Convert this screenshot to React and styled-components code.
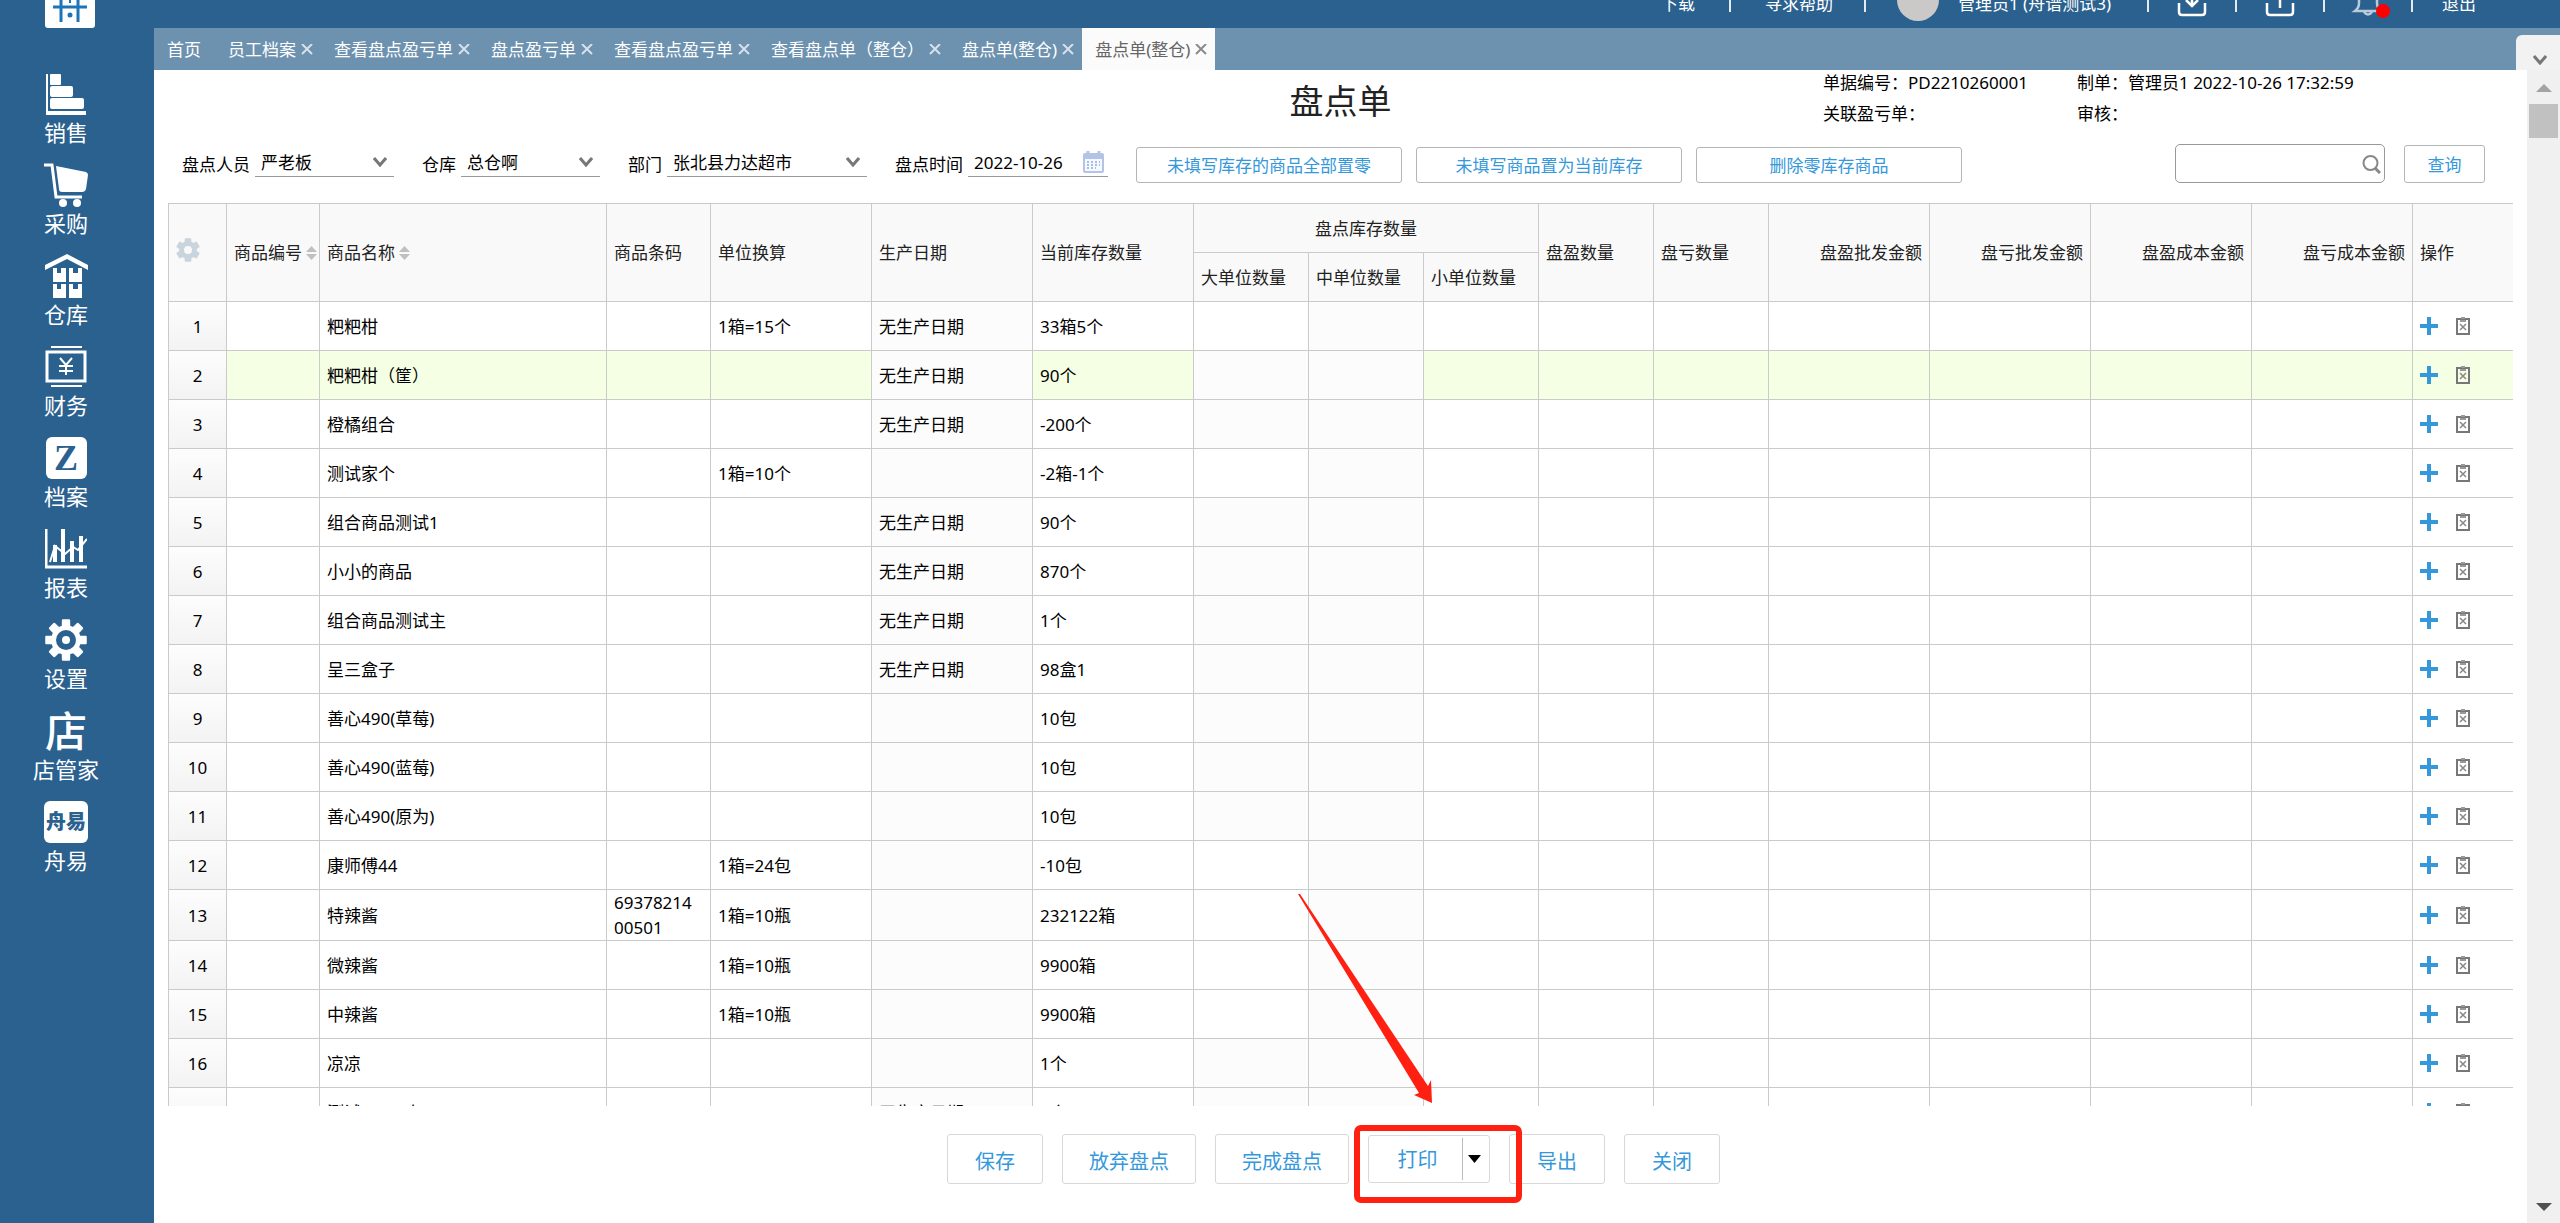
import React from "react";
import styled, { createGlobalStyle, css } from "styled-components";

const color = {
  navy: "#2a618f",
  tabs: "#6d92b0",
  link: "#3498db",
  line: "#cacaca",
  head: "#f9f9f9",
  locked: "#fcfcfc",
  hover: "#f5ffe3",
  mark: "#ff2011",
};

const GlobalStyle = createGlobalStyle`
  * {
    box-sizing: border-box;
  }

  body {
    margin: 0;
    color: #000;
    background: #fff;
    font-family: "Noto Sans", "Noto Sans CJK SC", sans-serif;
    font-size: 17px;
    line-height: 25px;
  }

  button, input, select {
    font: inherit;
    color: inherit;
  }

  button {
    padding: 0;
    border: 0;
    background: none;
    cursor: pointer;
  }
`;

//Page frame
const Page = styled.div`
  display: flex;
  height: 100vh;
  min-width: 1900px;
  overflow: hidden;
`;

const Sidebar = styled.nav`
  flex: none;
  display: flex;
  flex-direction: column;
  width: 154px;
  padding-right: 22px;
  background: ${color.navy};
`;

const Logo = styled.div`
  display: flex;
  justify-content: center;
  height: 70px;
  padding-left: 8px;
`;

const MenuItem = styled.a`
  display: flex;
  flex-direction: column;
  align-items: center;
  height: 91px;
  color: #fff;
  font-size: 22px;
  line-height: 32px;
  text-decoration: none;

  svg {
    display: block;
    margin-top: 2px;
  }
`;

const MenuGlyph = styled.span`
  height: 46px;
  font-size: 42px;
  line-height: 48px;
  font-weight: 500;
`;

const MenuBadge = styled.span`
  display: flex;
  align-items: center;
  justify-content: center;
  width: 44px;
  height: 42px;
  margin: 3px 0 1px;
  border-radius: 6px;
  background: #fff;
  color: ${color.navy};
  font-size: 20px;
  font-weight: 900;

  ${({ $serif }) =>
    $serif &&
    css`
      width: 41px;
      font-family: "Liberation Serif", serif;
      font-size: 36px;
    `}
`;

const Main = styled.div`
  flex: 1;
  min-width: 0;
  display: flex;
  flex-direction: column;
`;

//Header bar, its upper half is scrolled out of view
const TopBar = styled.header`
  flex: none;
  display: flex;
  align-items: flex-end;
  justify-content: flex-end;
  height: 28px;
  overflow: hidden;
  background: ${color.navy};
`;

const TopNav = styled.div`
  flex: none;
  display: flex;
  align-items: center;
  height: 50px;
  padding-right: 84px;
  color: #fff;

  a {
    color: inherit;
    text-decoration: none;
  }
`;

const Divider = styled.span`
  width: 2px;
  height: 17px;
  margin: 0 ${({ $gap }) => $gap || 29}px;
  background: #e3ebf2;
`;

const User = styled.span`
  display: flex;
  align-items: center;
  gap: 19px;
  padding-right: 7px;
`;

const Avatar = styled.span`
  width: 42px;
  height: 42px;
  margin-top: -6px;
  border-radius: 50%;
  background: #cbc8c8;
`;

const TopIcon = styled.button`
  display: block;
  height: 28px;
  color: #fff;

  svg {
    display: block;
    overflow: visible;
  }
`;

//Tabs
const TabBar = styled.div`
  flex: none;
  display: flex;
  height: 42px;
  background: ${color.tabs};
`;

const Tab = styled.div`
  display: flex;
  align-items: center;
  gap: 5px;
  padding: 0 8px 0 13px;
  color: ${({ $active }) => ($active ? "#666" : "#fff")};
  background: ${({ $active }) => ($active ? "#fbfbfb" : "none")};

  &:first-child {
    padding-right: 14px;
  }

  > button:first-child {
    white-space: nowrap;
  }
`;

const TabClose = styled.button`
  color: ${({ $active }) => ($active ? "#8a8a8a" : "#d7e1ea")};
  height: 16px;

  svg {
    display: block;
  }
`;

const TabMenu = styled.button`
  display: flex;
  align-items: center;
  justify-content: center;
  width: 44px;
  height: 35px;
  margin: 7px 0 0 auto;
  padding: 14px 0 0 4px;
  border-radius: 6px 0 0 0;
  background: #f2f2f2;
  color: #777;
`;

const Body = styled.div`
  flex: 1;
  min-height: 0;
  display: flex;
`;

const Sheet = styled.main`
  flex: 1;
  min-width: 0;
  display: flex;
  flex-direction: column;
  padding: 0 14px;
`;

const ScrollTrack = styled.div`
  flex: none;
  display: flex;
  flex-direction: column;
  align-items: center;
  width: 33px;
  padding: 14px 0 12px;
  background: #f0f0f0;
`;

const ScrollThumb = styled.div`
  width: 29px;
  height: 34px;
  margin: 12px 0 auto;
  background: #c1c1c1;
`;

//Title and document info
const SheetHead = styled.div`
  flex: none;
  display: grid;
  grid-template-columns: 1fr auto 1fr;
  height: 73px;
`;

const Title = styled.h1`
  grid-column: 2;
  margin: 0;
  padding-top: 8px;
  color: #222;
  font-size: 34px;
  font-weight: 400;
  line-height: 46px;
`;

const Info = styled.dl`
  display: grid;
  grid-template-columns: 254px 283px;
  justify-content: end;
  align-content: start;
  row-gap: 6px;
  margin: 0;
  padding-right: 153px;

  div {
    display: flex;
    white-space: nowrap;
  }

  dd {
    margin: 0;
  }
`;

//Filter row
const Filters = styled.form`
  flex: none;
  display: flex;
  align-items: flex-start;
  height: 60px;
  padding: 0 28px 0 14px;
`;

const Field = styled.div`
  display: flex;
  align-items: center;
  gap: 5px;
  height: 42px;
  margin-right: 28px;
`;

const FieldBox = styled.div`
  position: relative;
  width: ${({ $width }) => $width}px;
  height: 28px;
  margin-bottom: 2px;
  border-bottom: 1px solid #999;

  select, input {
    width: 100%;
    height: 26px;
    padding: 0 26px 0 6px;
    border: 0;
    outline: 0;
    background: none;
    appearance: none;
  }

  svg {
    position: absolute;
    right: ${({ $icon }) => $icon || 7}px;
    top: ${({ $icon }) => ($icon ? 2 : 8)}px;
    pointer-events: none;
  }
`;

const OutlineButton = styled.button`
  flex: none;
  width: ${({ $width }) => $width}px;
  height: ${({ $tall }) => ($tall ? 38 : 36)}px;
  margin: ${({ $tall }) => ($tall ? "2px 0 0 19px" : "4px 14px 0 0")};
  border: 1px solid #b5b5b5;
  border-radius: 3px;
  color: ${color.link};
`;

const Search = styled.div`
  position: relative;
  width: 210px;
  height: 39px;
  margin-left: auto;
  margin-top: 1px;

  input {
    width: 100%;
    height: 100%;
    padding: 0 30px 0 8px;
    border: 1px solid #999;
    border-radius: 5px;
    outline: 0;
  }

  svg {
    position: absolute;
    right: 4px;
    top: 10px;
  }
`;

//Table
const TableWrap = styled.div`
  flex: 1;
  min-height: 0;
  overflow: hidden;
`;

const Table = styled.table`
  width: 100%;
  table-layout: fixed;
  border-collapse: separate;
  border-spacing: 0;
  border-left: 1px solid ${color.line};
`;

const Th = styled.th`
  height: ${({ $top }) => ($top ? 50 : 49)}px;
  padding: 0 7px;
  border-right: 1px solid ${color.line};
  border-bottom: 1px solid ${color.line};
  ${({ $top }) => $top && `border-top: 1px solid ${color.line};`}
  background: ${color.head};
  color: #222;
  font-weight: 400;
  text-align: ${({ $align }) => $align || "left"};
  white-space: nowrap;

  &.last {
    border-right: 0;
  }
`;

const HeadLabel = styled.span`
  display: flex;
  align-items: center;
  gap: 4px;

  svg {
    flex: none;
  }
`;

const GearButton = styled.button`
  display: block;
  color: #c9d4dd;
  margin-bottom: 6px;

  svg {
    display: block;
  }
`;

const Td = styled.td`
  height: 49px;
  padding: 0 9px 0 7px;
  border-right: 1px solid ${color.line};
  border-bottom: 1px solid ${color.line};
  background: ${({ $locked }) => ($locked ? color.locked : "none")};
  word-break: break-all;

  &.last {
    border-right: 0;
  }
`;

const IndexCell = styled(Td)`
  padding: 0;
  text-align: center;
  background: linear-gradient(#fdfdfd, #f3f3f3);
`;

const Row = styled.tr`
  background: ${({ $active }) => ($active ? color.hover : "#fff")};
`;

const Actions = styled.div`
  display: flex;
  align-items: center;
  gap: 18px;

  button, svg {
    display: block;
  }
`;

//Footer with the sheet commands
const Footer = styled.footer`
  flex: none;
  display: flex;
  justify-content: center;
  gap: 19px;
  height: 117px;
  padding: 28px 14px 0 0;
`;

const FootButton = styled.button`
  min-width: 96px;
  height: 50px;
  padding: 6px 26px 0;
  border: 1px solid #d8d8d8;
  border-radius: 3px;
  color: ${color.link};
  font-size: 20px;
  line-height: 28px;
`;

const PrintGroup = styled.div`
  position: relative;
  display: flex;
  width: 122px;
  height: 48px;
  margin-top: 1px;
  border: 1px solid #d8d8d8;
  border-radius: 3px;
`;

const PrintButton = styled.button`
  width: 94px;
  margin: 2px 0;
  padding-left: 4px;
  border-right: 1px solid #bbb;
  color: ${color.link};
  font-size: 20px;
`;

const PrintMore = styled.button`
  flex: 1;
  display: flex;
  align-items: center;
  justify-content: center;
  padding-right: 4px;
`;

const Callout = styled.svg`
  position: absolute;
  left: -72px;
  top: -243px;
  pointer-events: none;
`;

const tabs = [
  "首页",
  "员工档案",
  "查看盘点盈亏单",
  "盘点盈亏单",
  "查看盘点盈亏单",
  "查看盘点单（整仓）",
  "盘点单(整仓)",
  "盘点单(整仓)",
];

const NO_DATE = "无生产日期";

const rows = [
  { name: "粑粑柑", unit: "1箱=15个", date: NO_DATE, stock: "33箱5个" },
  { name: "粑粑柑（筐）", date: NO_DATE, stock: "90个", active: true },
  { name: "橙橘组合", date: NO_DATE, stock: "-200个" },
  { name: "测试家个", unit: "1箱=10个", stock: "-2箱-1个" },
  { name: "组合商品测试1", date: NO_DATE, stock: "90个" },
  { name: "小小的商品", date: NO_DATE, stock: "870个" },
  { name: "组合商品测试主", date: NO_DATE, stock: "1个" },
  { name: "呈三盒子", date: NO_DATE, stock: "98盒1" },
  { name: "善心490(草莓)", stock: "10包" },
  { name: "善心490(蓝莓)", stock: "10包" },
  { name: "善心490(原为)", stock: "10包" },
  { name: "康师傅44", unit: "1箱=24包", stock: "-10包" },
  { name: "特辣酱", code: "6937821400501", unit: "1箱=10瓶", stock: "232122箱" },
  { name: "微辣酱", unit: "1箱=10瓶", stock: "9900箱" },
  { name: "中辣酱", unit: "1箱=10瓶", stock: "9900箱" },
  { name: "凉凉", stock: "1个" },
  { name: "测试10.26小", date: NO_DATE, stock: "9个" },
];

const columns = [
  58, 93, 287, 104, 161, 161, 161, 115, 115, 115, 115, 115, 161, 161, 161, 161,
  100,
];

const total = columns.reduce((sum, width) => sum + width, 0);

//Outline of a gear with square teeth
const gearPath = (teeth, outer, inner, cx, cy) => {
  const points = [];
  const step = (Math.PI * 2) / teeth;
  for (let i = 0; i < teeth; i++) {
    const a = i * step - Math.PI / 2;
    [
      [inner, -0.3],
      [outer, -0.2],
      [outer, 0.2],
      [inner, 0.3],
    ].forEach(([r, t]) => {
      const x = cx + r * Math.cos(a + t * step);
      const y = cy + r * Math.sin(a + t * step);
      points.push(`${x.toFixed(2)} ${y.toFixed(2)}`);
    });
  }
  return `M${points.join("L")}Z`;
};

const Chevron = () => (
  <svg width="14" height="10" viewBox="0 0 14 10" fill="none">
    <path d="M1 1l6 7 6-7" stroke="#777" strokeWidth="3" />
  </svg>
);

const SortIcon = () => (
  <svg width="11" height="14" viewBox="0 0 11 14" fill="#c0c0c0">
    <path d="M5.5 0L11 6H0zM5.5 14L0 8h11z" />
  </svg>
);

const SalesIcon = () => (
  <svg width="40" height="44" viewBox="0 0 40 44" fill="#fff">
    <path d="M0 2h2v37h38v4H0z" />
    <rect x="4" y="2" width="11" height="11" rx="1" />
    <rect x="4" y="14" width="23" height="11" rx="2" />
    <rect x="4" y="26" width="34" height="11" rx="2" />
  </svg>
);

const CartIcon = () => (
  <svg width="44" height="44" viewBox="0 0 44 44" fill="#fff">
    <path d="M0 2h8l4 32h26" fill="none" stroke="#fff" strokeWidth="3" />
    <path d="M12 3l30 6q2 1 2 3l-2 14q-1 3-4 3H18q-3 0-3-3z" />
    <circle cx="19" cy="40" r="4" />
    <circle cx="33" cy="40" r="4" />
  </svg>
);

const StoreIcon = () => (
  <svg width="43" height="44" viewBox="0 0 43 44" fill="#fff">
    <path d="M0 11L22 0l21 11v5L22 5 0 16z" />
    <path d="M8 14h4v5h4v-5h5v14H8zM24 14h4v5h5v-5h4v14H24zM8 30h4v5h4v-5h5v14H8zM24 30h4v5h5v-5h4v14H24z" />
  </svg>
);

const MoneyIcon = () => (
  <svg width="42" height="44" viewBox="0 0 42 44" fill="none" stroke="#fff">
    <path d="M6 2h31M6 41h31" strokeWidth="2" />
    <rect x="2" y="7" width="38" height="29" strokeWidth="3" />
    <path d="M15 13l6 7 6-7M21 20v10M14 21h14M14 26h14" strokeWidth="2" />
  </svg>
);

const ReportIcon = () => (
  <svg width="42" height="44" viewBox="0 0 42 44" fill="none" stroke="#fff">
    <path d="M1 2v38h41" strokeWidth="3" />
    <path d="M10 18v17M18 2v33M27 14v21M36 9v26" strokeWidth="4" />
    <path d="M5 35l5-16 10 8 8-7 5 3 9-11" strokeWidth="2" />
  </svg>
);

const SettingIcon = () => (
  <svg width="43" height="44" viewBox="0 0 43 44">
    <path
      d={gearPath(8, 20, 14, 21, 22)}
      fill="#fff"
      stroke="#fff"
      strokeWidth="2"
      strokeLinejoin="round"
    />
    <circle cx="21" cy="22" r="10" fill={color.navy} />
    <circle cx="21" cy="22" r="4" fill="#fff" />
  </svg>
);

const menu = [
  { label: "销售", icon: <SalesIcon /> },
  { label: "采购", icon: <CartIcon /> },
  { label: "仓库", icon: <StoreIcon /> },
  { label: "财务", icon: <MoneyIcon /> },
  { label: "档案", icon: <MenuBadge $serif>Z</MenuBadge> },
  { label: "报表", icon: <ReportIcon /> },
  { label: "设置", icon: <SettingIcon /> },
  { label: "店管家", icon: <MenuGlyph>店</MenuGlyph> },
  { label: "舟易", icon: <MenuBadge>舟易</MenuBadge> },
];

const SelectField = ({ id, label, value, width }) => (
  <Field>
    <label htmlFor={id}>{label}</label>
    <FieldBox $width={width}>
      <select id={id} defaultValue={value}>
        <option>{value}</option>
      </select>
      <Chevron />
    </FieldBox>
  </Field>
);

const TableRow = ({ row, index }) => (
  <Row $active={row.active}>
    <IndexCell>{index}</IndexCell>
    <Td />
    <Td>{row.name}</Td>
    <Td>{row.code}</Td>
    <Td>{row.unit}</Td>
    <Td $locked>{row.date}</Td>
    <Td>{row.stock}</Td>
    <Td $locked={!row.unit} />
    <Td $locked />
    <Td />
    <Td />
    <Td />
    <Td />
    <Td />
    <Td />
    <Td />
    <Td className="last">
      <Actions>
        <button type="button" aria-label="add">
          <svg width="18" height="18" viewBox="0 0 18 18">
            <path d="M9 0v18M0 9h18" stroke={color.link} strokeWidth="4" />
          </svg>
        </button>
        <button type="button" aria-label="remove">
          <svg width="14" height="18" viewBox="0 0 14 18" fill="none">
            <path d="M1 2h12v15H1z" stroke="#777" strokeWidth="2" />
            <path d="M4 4h6M5 1h4" stroke="#999" strokeWidth="2" />
            <path d="M4 7l6 6M10 7l-6 6" stroke="#888" strokeWidth="1.5" />
          </svg>
        </button>
      </Actions>
    </Td>
  </Row>
);

const App = () => (
  <>
    <GlobalStyle />
    <Page>
      <Sidebar>
        <Logo>
          <svg width="50" height="28" viewBox="0 0 50 28">
            <path d="M0 0h50v25q0 3-3 3H3q-3 0-3-3z" fill="#fff" />
            <path
              d="M16 0v22M33 0v22M8 7h34"
              stroke="#1b75bb"
              strokeWidth="3"
            />
            <path d="M25 0v3" stroke="#1b75bb" strokeWidth="2" />
            <circle cx="25" cy="15" r="2.5" fill="#1b75bb" />
          </svg>
        </Logo>
        {menu.map(({ label, icon }) => (
          <MenuItem key={label} href="#">
            {icon}
            {label}
          </MenuItem>
        ))}
      </Sidebar>

      <Main>
        <TopBar>
          <TopNav>
            <a href="#">下载</a>
            <Divider $gap={34} />
            <a href="#">寻求帮助</a>
            <Divider $gap={31} />
            <User>
              <Avatar />
              管理员1 (舟谱测试3)
            </User>
            <Divider />
            <TopIcon aria-label="inbox">
              <svg width="28" height="26" viewBox="0 0 28 26" fill="none">
                <path
                  d="M1 13v9q0 3 3 3h20q3 0 3-3v-9M14 0v16M8 10l6 6 6-6"
                  stroke="currentColor"
                  strokeWidth="2.5"
                />
              </svg>
            </TopIcon>
            <Divider />
            <TopIcon aria-label="outbox">
              <svg width="28" height="26" viewBox="0 0 28 26" fill="none">
                <path
                  d="M1 13v9q0 3 3 3h20q3 0 3-3v-9M14 18V2M8 8l6-6 6 6"
                  stroke="currentColor"
                  strokeWidth="2.5"
                />
              </svg>
            </TopIcon>
            <Divider />
            <TopIcon aria-label="notice">
              <svg width="28" height="26" viewBox="0 0 28 26" fill="none">
                <path
                  d="M1 21q4-3 4-8V9q0-7 9-7t9 7v4q0 5 4 8zM10 22q4 5 8 0"
                  stroke="#b9cbdb"
                  strokeWidth="2.5"
                />
                <circle cx="29" cy="21" r="7" fill="#f00" />
              </svg>
            </TopIcon>
            <Divider />
            <a href="#">退出</a>
          </TopNav>
        </TopBar>

        <TabBar>
          {tabs.map((label, i) => {
            const active = i === tabs.length - 1;
            return (
              <Tab key={i} $active={active}>
                <button type="button">{label}</button>
                {i > 0 && (
                  <TabClose type="button" aria-label="close" $active={active}>
                    <svg width="12" height="11" viewBox="0 0 12 11">
                      <path
                        d="M1 0l10 10M11 0L1 10"
                        stroke="currentColor"
                        strokeWidth="2"
                      />
                    </svg>
                  </TabClose>
                )}
              </Tab>
            );
          })}
          <TabMenu type="button" aria-label="more tabs">
            <Chevron />
          </TabMenu>
        </TabBar>

        <Body>
          <Sheet>
            <SheetHead>
              <Title>盘点单</Title>
              <Info>
                <div>
                  <dt>单据编号：</dt>
                  <dd>PD2210260001</dd>
                </div>
                <div>
                  <dt>制单：</dt>
                  <dd>管理员1 2022-10-26 17:32:59</dd>
                </div>
                <div>
                  <dt>关联盈亏单：</dt>
                </div>
                <div>
                  <dt>审核：</dt>
                </div>
              </Info>
            </SheetHead>

            <Filters onSubmit={(e) => e.preventDefault()}>
              <SelectField
                id="staff"
                label="盘点人员"
                value="严老板"
                width={139}
              />
              <SelectField
                id="store"
                label="仓库"
                value="总仓啊"
                width={139}
              />
              <SelectField
                id="dept"
                label="部门"
                value="张北县力达超市"
                width={200}
              />
              <Field>
                <label htmlFor="date">盘点时间</label>
                <FieldBox $width={140} $icon={4}>
                  <input id="date" type="text" defaultValue="2022-10-26" />
                  <svg width="21" height="22" viewBox="0 0 21 22">
                    <rect y="2" width="21" height="20" rx="2" fill="#b3c4e6" />
                    <rect x="2" y="8" width="17" height="12" fill="#f5f8ff" />
                    <path d="M5 0v4M16 0v4" stroke="#b3c4e6" strokeWidth="3" />
                    <path
                      d="M4 11h13M4 14h13M4 17h9"
                      stroke="#a9bce2"
                      strokeWidth="2"
                      strokeDasharray="2 2"
                    />
                  </svg>
                </FieldBox>
              </Field>
              <OutlineButton type="button" $width={266}>
                未填写库存的商品全部置零
              </OutlineButton>
              <OutlineButton type="button" $width={266}>
                未填写商品置为当前库存
              </OutlineButton>
              <OutlineButton type="button" $width={266}>
                删除零库存商品
              </OutlineButton>
              <Search>
                <input type="text" aria-label="search" />
                <svg width="19" height="20" viewBox="0 0 19 20" fill="none">
                  <circle cx="8.5" cy="9" r="7" stroke="#888" strokeWidth="2" />
                  <path d="M13 14l5 5" stroke="#888" strokeWidth="3" />
                </svg>
              </Search>
              <OutlineButton type="submit" $width={81} $tall>
                查询
              </OutlineButton>
            </Filters>

            <TableWrap>
              <Table>
                <colgroup>
                  {columns.map((width, i) => (
                    <col
                      key={i}
                      style={{ width: `${(width / total) * 100}%` }}
                    />
                  ))}
                </colgroup>
                <thead>
                  <tr>
                    <Th $top rowSpan={2}>
                      <GearButton type="button" aria-label="columns">
                        <svg width="24" height="24" viewBox="0 0 24 24">
                          <path
                            d={gearPath(6, 11, 8, 12, 12)}
                            fill="currentColor"
                            stroke="currentColor"
                            strokeWidth="2"
                            strokeLinejoin="round"
                          />
                          <circle cx="12" cy="12" r="4" fill={color.head} />
                        </svg>
                      </GearButton>
                    </Th>
                    <Th $top rowSpan={2}>
                      <HeadLabel>
                        商品编号
                        <SortIcon />
                      </HeadLabel>
                    </Th>
                    <Th $top rowSpan={2}>
                      <HeadLabel>
                        商品名称
                        <SortIcon />
                      </HeadLabel>
                    </Th>
                    <Th $top rowSpan={2}>商品条码</Th>
                    <Th $top rowSpan={2}>单位换算</Th>
                    <Th $top rowSpan={2}>生产日期</Th>
                    <Th $top rowSpan={2}>当前库存数量</Th>
                    <Th $top colSpan={3} $align="center">
                      盘点库存数量
                    </Th>
                    <Th $top rowSpan={2}>盘盈数量</Th>
                    <Th $top rowSpan={2}>盘亏数量</Th>
                    <Th $top rowSpan={2} $align="right">
                      盘盈批发金额
                    </Th>
                    <Th $top rowSpan={2} $align="right">
                      盘亏批发金额
                    </Th>
                    <Th $top rowSpan={2} $align="right">
                      盘盈成本金额
                    </Th>
                    <Th $top rowSpan={2} $align="right">
                      盘亏成本金额
                    </Th>
                    <Th $top rowSpan={2} className="last">
                      操作
                    </Th>
                  </tr>
                  <tr>
                    <Th>大单位数量</Th>
                    <Th>中单位数量</Th>
                    <Th>小单位数量</Th>
                  </tr>
                </thead>
                <tbody>
                  {rows.map((row, i) => (
                    <TableRow key={i} row={row} index={i + 1} />
                  ))}
                </tbody>
              </Table>
            </TableWrap>

            <Footer>
              <FootButton type="button">保存</FootButton>
              <FootButton type="button">放弃盘点</FootButton>
              <FootButton type="button">完成盘点</FootButton>
              <PrintGroup>
                <PrintButton type="button">打印</PrintButton>
                <PrintMore type="button" aria-label="print options">
                  <svg width="13" height="8" viewBox="0 0 13 8">
                    <path d="M0 0h13L6.5 8z" fill="#000" />
                  </svg>
                </PrintMore>
                <Callout width="226" height="312" viewBox="0 0 226 312">
                  <path
                    d="M1 1L3 1 131 193 134 187 135 210 117 202 122 200Z"
                    fill={color.mark}
                  />
                  <rect
                    x="60"
                    y="235"
                    width="162"
                    height="72"
                    rx="4"
                    fill="none"
                    stroke={color.mark}
                    strokeWidth="6"
                  />
                </Callout>
              </PrintGroup>
              <FootButton type="button">导出</FootButton>
              <FootButton type="button">关闭</FootButton>
            </Footer>
          </Sheet>

          <ScrollTrack>
            <svg width="16" height="8" viewBox="0 0 16 8">
              <path d="M8 0l8 8H0z" fill="#a3a3a3" />
            </svg>
            <ScrollThumb />
            <svg width="16" height="8" viewBox="0 0 16 8">
              <path d="M0 0h16L8 8z" fill="#505050" />
            </svg>
          </ScrollTrack>
        </Body>
      </Main>
    </Page>
  </>
);

export default App;
